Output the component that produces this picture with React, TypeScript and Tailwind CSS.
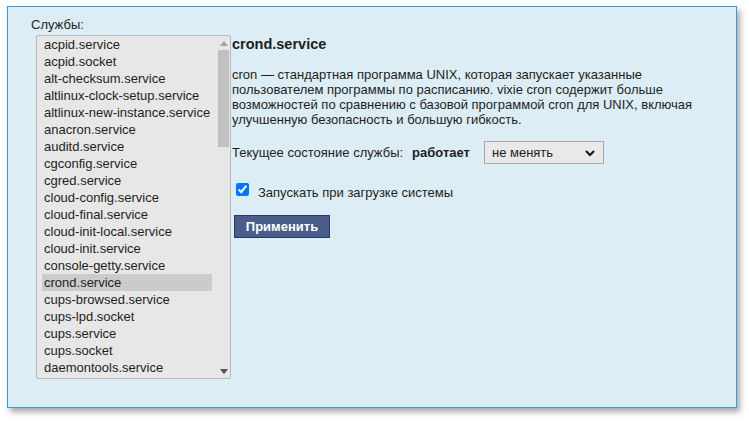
import { useState } from 'react';

const services = [
  'acpid.service',
  'acpid.socket',
  'alt-checksum.service',
  'altlinux-clock-setup.service',
  'altlinux-new-instance.service',
  'anacron.service',
  'auditd.service',
  'cgconfig.service',
  'cgred.service',
  'cloud-config.service',
  'cloud-final.service',
  'cloud-init-local.service',
  'cloud-init.service',
  'console-getty.service',
  'crond.service',
  'cups-browsed.service',
  'cups-lpd.socket',
  'cups.service',
  'cups.socket',
  'daemontools.service',
];

export default function App() {
  const [selected, setSelected] = useState('crond.service');
  const [autostart, setAutostart] = useState(true);

  return (
    <div
      className="min-h-screen bg-white pt-[6px] pl-[7px] text-[13px] text-[#1e1e1e]"
      style={{ fontFamily: '"Liberation Sans", Arial, sans-serif' }}
    >
      <div className="w-[730px] h-[402px] border border-[#3d9ad3] bg-[#dcedf5] pl-[23px] pt-[9px] shadow-[3px_4px_6px_rgba(0,0,0,0.35)]">
        <div className="leading-[17px]">Службы:</div>

        <div className="flex mt-[2px]">
          {/* Services list */}
          <div className="ml-[5px] w-[195px] h-[344px] border border-[#b9b9b9] rounded-[2px] bg-[#e7e7e7] flex overflow-hidden">
            <ul className="flex-1 pl-[5px] pr-[5px] pt-0">
              {services.map((s) => (
                <li
                  key={s}
                  onClick={() => setSelected(s)}
                  className={
                    'px-[2px] leading-[17px] whitespace-nowrap cursor-default ' +
                    (s === selected ? 'bg-[#cbcbcb]' : '')
                  }
                >
                  {s}
                </li>
              ))}
            </ul>
            {/* Scrollbar */}
            <div className="w-[14px] flex flex-col items-center">
              <div className="h-[14px] flex items-center justify-center">
                <svg width="8" height="5" viewBox="0 0 8 5">
                  <path d="M0 5 L4 0 L8 5 Z" fill="#a3a3a3" />
                </svg>
              </div>
              <div className="flex-1 w-full px-[1px]">
                <div className="h-[97px] w-full bg-[#c1c1c1]" />
              </div>
              <div className="h-[14px] flex items-center justify-center">
                <svg width="8" height="5" viewBox="0 0 8 5">
                  <path d="M0 0 L8 0 L4 5 Z" fill="#505050" />
                </svg>
              </div>
            </div>
          </div>

          {/* Details */}
          <div className="ml-[1px] flex-1 pr-[30px]">
            <h2 className="text-[14.5px] font-bold leading-[18px]">crond.service</h2>
            <p className="mt-[14px] leading-[15px]">
              cron — стандартная программа UNIX, которая запускает указанные пользователем программы по
              расписанию. vixie cron содержит больше возможностей по сравнению с базовой программой cron для
              UNIX, включая улучшенную безопасность и большую гибкость.
            </p>

            <div className="mt-[14px] flex items-center h-[23px]">
              <span>Текущее состояние службы:</span>
              <span className="ml-[9px] font-bold">работает</span>
              <div className="ml-[14px] relative w-[120px] h-[23px] border border-[#a8a8a8] bg-[#e9e9e9] flex items-center pl-[7px]">
                <span>не менять</span>
                <svg className="absolute right-[8px] top-[8px]" width="10" height="7" viewBox="0 0 10 7">
                  <path d="M1 1 L5 5 L9 1" stroke="#111" strokeWidth="2" fill="none" />
                </svg>
              </div>
            </div>

            <label className="mt-[19px] flex items-start h-[17px]">
              <input
                type="checkbox"
                checked={autostart}
                onChange={(e) => setAutostart(e.target.checked)}
                className="ml-[4px] w-[13px] h-[13px] accent-[#0075ff]"
              />
              <span className="ml-[9px] mt-[1px] leading-[17px]">Запускать при загрузке системы</span>
            </label>

            <button className="mt-[15px] ml-[2px] w-[96px] h-[23px] bg-[#4a5d89] border border-[#293a68] text-white font-bold text-[13px]">
              Применить
            </button>
          </div>
        </div>
      </div>
    </div>
  );
}
